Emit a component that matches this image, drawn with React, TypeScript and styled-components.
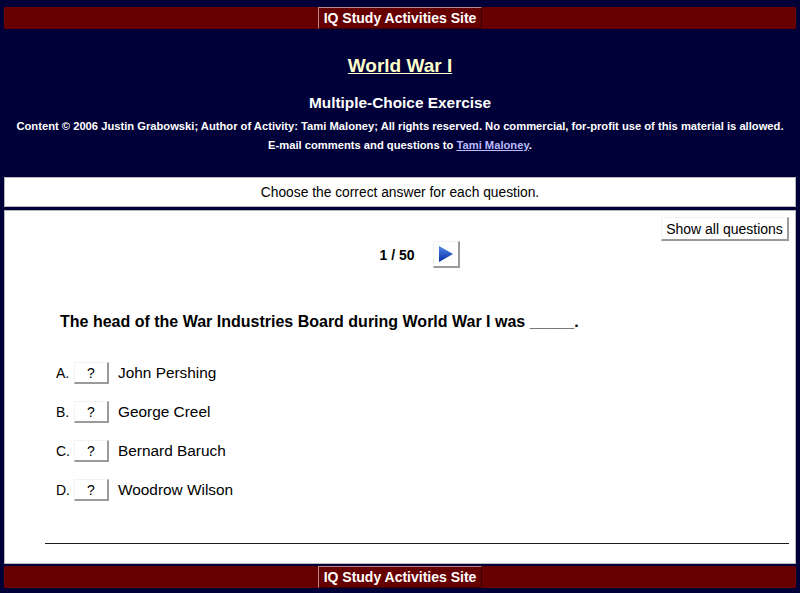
import React from "react";
import styled, { createGlobalStyle } from "styled-components";

const Global = createGlobalStyle`
  html, body { margin: 0; padding: 0; }
  body {
    background: #000038;
    font-family: "Liberation Sans", Arial, sans-serif;
    color: #000;
  }
`;

const Page = styled.div`
  display: flex;
  flex-direction: column;
  height: 593px;
  padding: 7px 4px 5px;
  box-sizing: border-box;
`;

const NavBar = styled.div`
  display: flex;
  justify-content: center;
  height: 22px;
  background: #660000;
  box-sizing: border-box;
`;

const NavButton = styled.a`
  display: flex;
  align-items: center;
  justify-content: center;
  width: 164px;
  box-sizing: border-box;
  border-style: solid;
  border-width: 1px;
  border-color: #b88a8a #3a0000 #3a0000 #b88a8a;
  color: #ffffff;
  font-weight: bold;
  font-size: 14px;
  text-decoration: none;
`;

const Header = styled.header`
  display: flex;
  flex-direction: column;
  align-items: center;
  color: #ffffff;
  text-align: center;
`;

const Title = styled.h1`
  margin: 25px 0 0;
  font-size: 19px;
  line-height: 24px;
  font-weight: bold;
  color: #ffffcc;
  text-decoration: underline;
`;

const Subtitle = styled.h2`
  margin: 15px 0 0;
  font-size: 15.4px;
  line-height: 20px;
  font-weight: bold;
`;

const Credits = styled.p`
  margin: 4px 0 0;
  font-size: 11.2px;
  line-height: 19px;
  font-weight: bold;
`;

const Link = styled.a`
  color: #bbbbff;
  text-decoration: underline;
`;

const Panel = styled.div`
  background: #ffffff;
  border: 1px solid #b8b8b8;
  box-sizing: border-box;
`;

const Instructions = styled(Panel)`
  margin-top: 22px;
  height: 30px;
  display: flex;
  align-items: center;
  justify-content: center;
  font-size: 13.8px;
`;

const Main = styled(Panel)`
  margin-top: 3px;
  margin-bottom: 2px;
  display: flex;
  flex-direction: column;
  padding: 6px 6px 19px 0;
`;

const TopRow = styled.div`
  display: flex;
  justify-content: flex-end;
`;

const Button = styled.button`
  font-family: "Liberation Sans", Arial, sans-serif;
  background: #ffffff;
  color: #000;
  border-style: solid;
  border-width: 1px 2px 2px 1px;
  border-color: #f2f2f2 #9a9a9a #9a9a9a #f2f2f2;
  padding: 0;
  box-sizing: border-box;
  cursor: pointer;
  display: flex;
  align-items: center;
  justify-content: center;
`;

const ShowAll = styled(Button)`
  width: 128px;
  height: 24px;
  font-size: 14px;
`;

const Counter = styled.div`
  display: flex;
  align-items: center;
  justify-content: center;
  gap: 18px;
  height: 27px;
  font-weight: bold;
  font-size: 14px;
`;

const NavArrow = styled(Button)<{ $hidden?: boolean }>`
  width: 27px;
  height: 27px;
  visibility: ${(p) => (p.$hidden ? "hidden" : "visible")};
`;

const Question = styled.div`
  margin: 44px 0 0 55px;
  font-size: 16px;
  line-height: 20px;
  font-weight: bold;
`;

const Options = styled.ol`
  list-style: none;
  margin: 30px 0 0 51px;
  padding: 0;
  display: flex;
  flex-direction: column;
  gap: 17px;
`;

const Option = styled.li`
  display: flex;
  align-items: center;
  height: 22px;
`;

const Letter = styled.span`
  width: 18px;
  font-size: 14px;
`;

const AnswerButton = styled(Button)`
  width: 35px;
  height: 22px;
  font-size: 14px;
  margin-right: 9px;
`;

const AnswerText = styled.span`
  font-size: 15.4px;
`;

const Rule = styled.hr`
  margin: 42px 0 0 40px;
  border: 0;
  height: 1px;
  background: #1a1a1a;
`;

const Arrow = ({ dir }: { dir: "left" | "right" }) => (
  <svg width="15" height="16" viewBox="0 0 15 16">
    <defs>
      <linearGradient id={`g-${dir}`} x1="0" y1="0" x2="0" y2="1">
        <stop offset="0" stopColor="#4f86e6" />
        <stop offset="1" stopColor="#0a2fa8" />
      </linearGradient>
    </defs>
    <polygon
      points={dir === "right" ? "1,0 15,8 1,16" : "14,0 0,8 14,16"}
      fill={`url(#g-${dir})`}
    />
  </svg>
);

const options = [
  ["A.", "John Pershing"],
  ["B.", "George Creel"],
  ["C.", "Bernard Baruch"],
  ["D.", "Woodrow Wilson"],
];

export default function App() {
  return (
    <>
      <Global />
      <Page>
        <NavBar>
          <NavButton href="#">IQ Study Activities Site</NavButton>
        </NavBar>
        <Header>
          <Title>World War I</Title>
          <Subtitle>Multiple-Choice Exercise</Subtitle>
          <Credits>
            Content © 2006 Justin Grabowski; Author of Activity: Tami Maloney; All rights reserved. No commercial, for-profit use of this material is allowed.
            <br />
            E-mail comments and questions to <Link href="#">Tami Maloney</Link>.
          </Credits>
        </Header>
        <Instructions>Choose the correct answer for each question.</Instructions>
        <Main>
          <TopRow>
            <ShowAll>Show all questions</ShowAll>
          </TopRow>
          <Counter>
            <NavArrow $hidden>
              <Arrow dir="left" />
            </NavArrow>
            <span>1 / 50</span>
            <NavArrow>
              <Arrow dir="right" />
            </NavArrow>
          </Counter>
          <Question>The head of the War Industries Board during World War I was _____.</Question>
          <Options>
            {options.map(([l, t]) => (
              <Option key={l}>
                <Letter>{l}</Letter>
                <AnswerButton>?</AnswerButton>
                <AnswerText>{t}</AnswerText>
              </Option>
            ))}
          </Options>
          <Rule />
        </Main>
        <NavBar>
          <NavButton href="#">IQ Study Activities Site</NavButton>
        </NavBar>
      </Page>
    </>
  );
}
